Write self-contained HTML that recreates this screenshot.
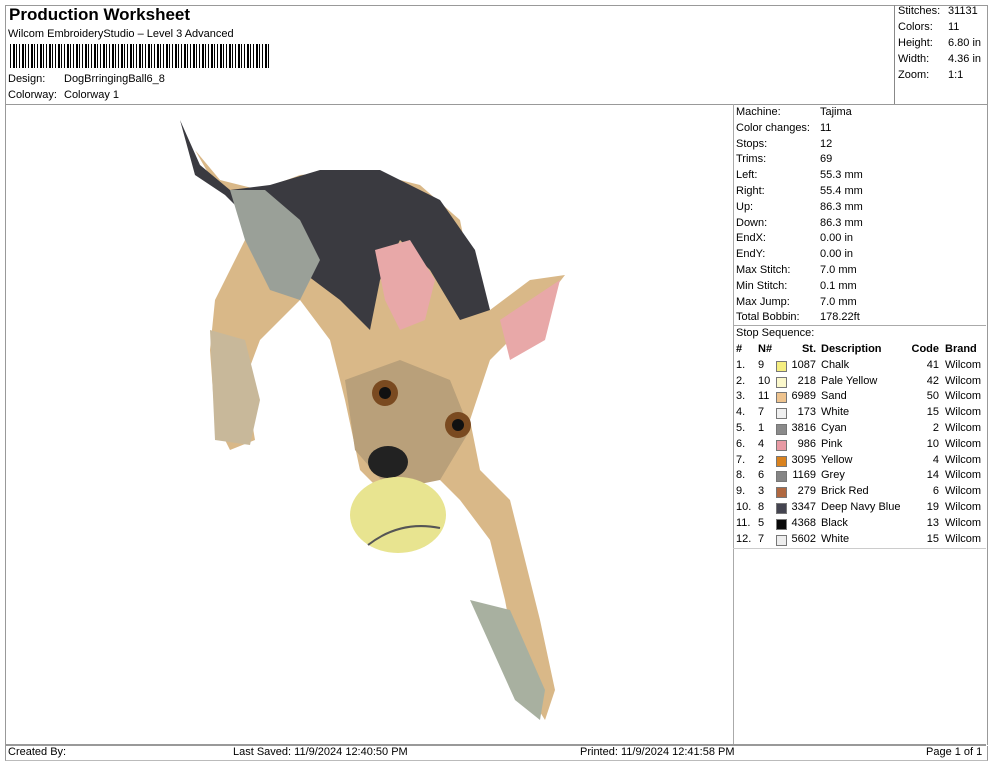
<!DOCTYPE html>
<html><head><meta charset="utf-8"><style>
body{margin:0;width:990px;height:762px;background:#fff;font-family:"Liberation Sans",Arial,sans-serif;color:#000;position:relative;overflow:hidden}
.a{position:absolute}
.t{font-size:11px;line-height:15.8px}
.b{border:1px solid #888}
</style></head><body>
<div class="a b" style="left:5px;top:5px;width:981px;height:98px;border-color:#999"></div>
<div class="a" style="left:9px;top:5px;font-size:17px;font-weight:bold">Production Worksheet</div>
<div class="a t" style="left:8px;top:27px">Wilcom EmbroideryStudio – Level 3 Advanced</div>
<div class="a" style="left:10px;top:44px;width:259px;height:24px;background:repeating-linear-gradient(90deg,#000 0 1px,#fff 1px 3px,#000 3px 5px,#fff 5px 6px,#000 6px 7px,#fff 7px 9px)"></div>
<div class="a t" style="left:8px;top:72px">Design:</div><div class="a t" style="left:64px;top:72px">DogBrringingBall6_8</div>
<div class="a t" style="left:8px;top:88px">Colorway:</div><div class="a t" style="left:64px;top:88px">Colorway 1</div>
<div class="a" style="left:894px;top:5px;width:1px;height:99px;background:#888"></div>
<div class="a t" style="left:898px;top:4px;line-height:15.9px">Stitches:<br>Colors:<br>Height:<br>Width:<br>Zoom:</div>
<div class="a t" style="left:948px;top:4px;line-height:15.9px">31131<br>11<br>6.80 in<br>4.36 in<br>1:1</div>
<div class="a" style="left:5px;top:104px;width:981px;height:641px;border-left:1px solid #999;border-right:1px solid #999"></div>
<div class="a" style="left:733px;top:104px;width:1px;height:641px;background:#aaa"></div>
<div class="a t" style="left:736px;top:105px">Machine:<br>Color changes:<br>Stops:<br>Trims:<br>Left:<br>Right:<br>Up:<br>Down:<br>EndX:<br>EndY:<br>Max Stitch:<br>Min Stitch:<br>Max Jump:<br>Total Bobbin:<br>Stop Sequence:</div>
<div class="a t" style="left:820px;top:105px">Tajima<br>11<br>12<br>69<br>55.3 mm<br>55.4 mm<br>86.3 mm<br>86.3 mm<br>0.00 in<br>0.00 in<br>7.0 mm<br>0.1 mm<br>7.0 mm<br>178.22ft</div>
<div class="a" style="left:733px;top:325px;width:253px;height:1px;background:#aaa"></div>
<div class="a" style="left:733px;top:548px;width:253px;height:1px;background:#ccc"></div>
<div class="a t" style="left:736px;top:342px;width:250px">
<div style="position:relative;height:15.8px;font-weight:bold;text-decoration:underline"><span class="a" style="left:0">#</span><span class="a" style="left:22px">N#</span><span class="a" style="right:170px">St.</span><span class="a" style="left:85px">Description</span><span class="a" style="right:47px">Code</span><span class="a" style="left:209px">Brand</span></div>
<div id="rows"></div></div>
<script>
var r=[["1.","9","#f5ee80","1087","Chalk","41"],["2.","10","#fbf8cc","218","Pale Yellow","42"],["3.","11","#eec38e","6989","Sand","50"],["4.","7","#f0f0f0","173","White","15"],["5.","1","#8a8a8a","3816","Cyan","2"],["6.","4","#e89aa4","986","Pink","10"],["7.","2","#d9821e","3095","Yellow","4"],["8.","6","#858585","1169","Grey","14"],["9.","3","#b06840","279","Brick Red","6"],["10.","8","#444450","3347","Deep Navy Blue","19"],["11.","5","#080808","4368","Black","13"],["12.","7","#eeeeee","5602","White","15"]];
var h="";r.forEach(function(x){h+='<div style="position:relative;height:15.8px"><span class="a" style="left:0">'+x[0]+'</span><span class="a" style="left:22px">'+x[1]+'</span><span class="a" style="left:40px;top:3px;width:9px;height:9px;background:'+x[2]+';border:1px solid #777"></span><span class="a" style="right:170px">'+x[3]+'</span><span class="a" style="left:85px">'+x[4]+'</span><span class="a" style="right:47px">'+x[5]+'</span><span class="a" style="left:209px">Wilcom</span></div>'});document.getElementById("rows").innerHTML=h;
</script>
<div class="a" style="left:5px;top:744px;width:981px;height:2px;background:#999"></div>
<div class="a" style="left:5px;top:746px;width:981px;height:14px;border-left:1px solid #999;border-right:1px solid #999;border-bottom:1px solid #bbb"></div>
<div class="a t" style="left:8px;top:745px">Created By:</div>
<div class="a t" style="left:233px;top:745px">Last Saved: 11/9/2024 12:40:50 PM</div>
<div class="a t" style="left:580px;top:745px">Printed: 11/9/2024 12:41:58 PM</div>
<div class="a t" style="left:926px;top:745px">Page 1 of 1</div>
<svg class="a" style="left:160px;top:110px" width="420" height="620" viewBox="160 110 420 620">
<path d="M175 120 L195 150 L215 185 L240 195 L250 230 L235 260 L215 300 L210 350 L215 420 L230 450 L255 440 L245 380 L260 340 L300 300 L330 340 L345 400 L360 470 L380 490 L430 470 L460 500 L490 540 L505 600 L520 680 L545 720 L555 690 L540 620 L525 560 L510 500 L480 470 L470 420 L490 360 L530 320 L565 275 L530 280 L490 310 L470 270 L460 220 L420 185 L360 170 L300 175 L260 190 L220 180 L195 150 Z" fill="#d9b888"/>
<path d="M180 120 L200 165 L230 190 L270 185 L320 170 L380 170 L440 200 L475 250 L490 310 L460 320 L430 270 L400 240 L380 280 L370 330 L340 300 L300 270 L260 250 L245 215 L225 195 L195 175 Z" fill="#3a3a40"/>
<path d="M230 190 L265 190 L300 220 L320 260 L300 300 L270 290 L245 240 Z" fill="#9aa098"/>
<path d="M375 250 L410 240 L435 280 L425 320 L400 330 L385 300 Z" fill="#e8a8a8"/>
<path d="M500 320 L560 280 L545 340 L510 360 Z" fill="#e8a8a8"/>
<path d="M345 380 L400 360 L450 380 L470 430 L440 480 L390 490 L355 450 Z" fill="#b9a07a"/>
<path d="M210 330 L245 340 L260 400 L250 445 L215 440 Z" fill="#c8b89a"/>
<path d="M470 600 L510 610 L545 690 L540 720 L515 700 Z" fill="#a8b0a0"/>
<circle cx="385" cy="393" r="13" fill="#7a4a20"/><circle cx="385" cy="393" r="6" fill="#111"/>
<circle cx="458" cy="425" r="13" fill="#7a4a20"/><circle cx="458" cy="425" r="6" fill="#111"/>
<ellipse cx="388" cy="462" rx="20" ry="16" fill="#222"/>
<ellipse cx="398" cy="515" rx="48" ry="38" fill="#e8e490"/>
<path d="M368 545 Q400 520 440 528" stroke="#555" stroke-width="2" fill="none"/>
</svg>
</body></html>
